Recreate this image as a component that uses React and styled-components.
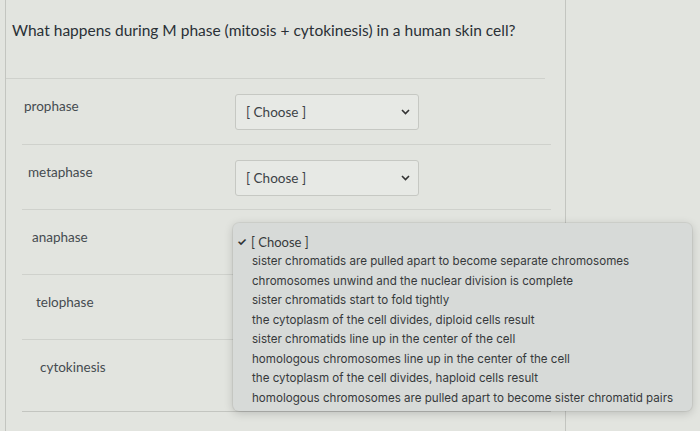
import React from 'react'
import styled, { createGlobalStyle } from 'styled-components'

const GlobalStyle = createGlobalStyle`
  html, body {
    margin: 0;
    background: #e2e4df;
  }
  body {
    font-family: Lato, "Open Sans", sans-serif;
    overflow: hidden;
  }
`

const Page = styled.div`
  height: 431px;
  padding-left: 5px;
`

const Panel = styled.div`
  width: 561px;
  height: 100%;
  border-left: 1px solid #c3c5c0;
  border-right: 1px solid #c3c5c0;
  box-sizing: border-box;
`

const Question = styled.div`
  padding: 21px 6px 0;
  height: 79px;
  box-sizing: border-box;
  font-size: 15.5px;
  color: #2a3036;
  border-bottom: 1px solid #cfd1cc;
  margin-right: 20px;
`

const Rows = styled.div`
  padding: 0 14px 0 16px;
`

const Row = styled.div`
  display: grid;
  grid-template-columns: 213px 184px;
  height: ${(p) => (p.$last ? 73 : 65)}px;
  border-top: ${(p) => (p.$first ? 'none' : '1px solid #cfd1cc')};
  border-bottom: ${(p) => (p.$last ? '1px solid #c3c5c0' : 'none')};
  box-sizing: border-box;
`

const Label = styled.div`
  padding: 19px 0 0 ${(p) => p.$indent}px;
  font-size: 13.5px;
  color: #454b50;
`

const SelectWrap = styled.div`
  position: relative;
  padding-top: 15px;
`

const Select = styled.div`
  height: 36px;
  box-sizing: border-box;
  border: 1px solid #c6c8c3;
  border-radius: 3px;
  background: #e7e9e5;
  display: flex;
  align-items: center;
  justify-content: space-between;
  padding: 0 8px 0 10px;
  font-size: 13.5px;
  color: #3c4246;
`

const Menu = styled.div`
  position: absolute;
  top: 13px;
  left: -2px;
  width: 459px;
  background: #d7dad8;
  border-radius: 6px;
  box-shadow: 0 2px 10px rgba(0, 0, 0, 0.18), 0 0 0 1px rgba(0, 0, 0, 0.05);
  padding: 9px 0 3px;
  font-family: Inter, "Noto Sans", sans-serif;
  font-size: 11.6px;
  color: #36393b;
  z-index: 2;
`

const Item = styled.div`
  display: flex;
  align-items: center;
  height: 19.5px;
  padding-left: ${(p) => (p.$checked ? 4 : 19)}px;
  white-space: nowrap;
`

const Check = styled.span`
  width: 14px;
  font-size: 11px;
  font-weight: 700;
  color: #2f3234;
`

const ChosenText = styled.span`
  font-family: Lato, sans-serif;
  font-size: 13px;
`

const Chevron = () => (
  <svg width="9" height="6" viewBox="0 0 9 6">
    <path d="M1 1 L4.5 4.5 L8 1" fill="none" stroke="#333" strokeWidth="1.6" />
  </svg>
)

const options = [
  'sister chromatids are pulled apart to become separate chromosomes',
  'chromosomes unwind and the nuclear division is complete',
  'sister chromatids start to fold tightly',
  'the cytoplasm of the cell divides, diploid cells result',
  'sister chromatids line up in the center of the cell',
  'homologous chromosomes line up in the center of the cell',
  'the cytoplasm of the cell divides, haploid cells result',
  'homologous chromosomes are pulled apart to become sister chromatid pairs',
]

// rows below the open menu are hidden behind it
const phases = [
  { name: 'prophase', indent: 2 },
  { name: 'metaphase', indent: 6 },
  { name: 'anaphase', indent: 10, open: true },
  { name: 'telophase', indent: 14, covered: true },
  { name: 'cytokinesis', indent: 18, covered: true },
]

const App = () => (
  <>
    <GlobalStyle />
    <Page>
      <Panel>
        <Question>What happens during M phase (mitosis + cytokinesis) in a human skin cell?</Question>
        <Rows>
          {phases.map((ph, i) => (
            <Row key={ph.name} $first={i === 0} $last={i === phases.length - 1}>
              <Label $indent={ph.indent}>{ph.name}</Label>
              <SelectWrap>
                {!ph.open && !ph.covered && (
                  <Select>
                    [ Choose ]
                    <Chevron />
                  </Select>
                )}
                {ph.open && (
                  <Menu>
                    <Item $checked>
                      <Check>✓</Check>
                      <ChosenText>[ Choose ]</ChosenText>
                    </Item>
                    {options.map((o) => (
                      <Item key={o}>{o}</Item>
                    ))}
                  </Menu>
                )}
              </SelectWrap>
            </Row>
          ))}
        </Rows>
      </Panel>
    </Page>
  </>
)

export default App
